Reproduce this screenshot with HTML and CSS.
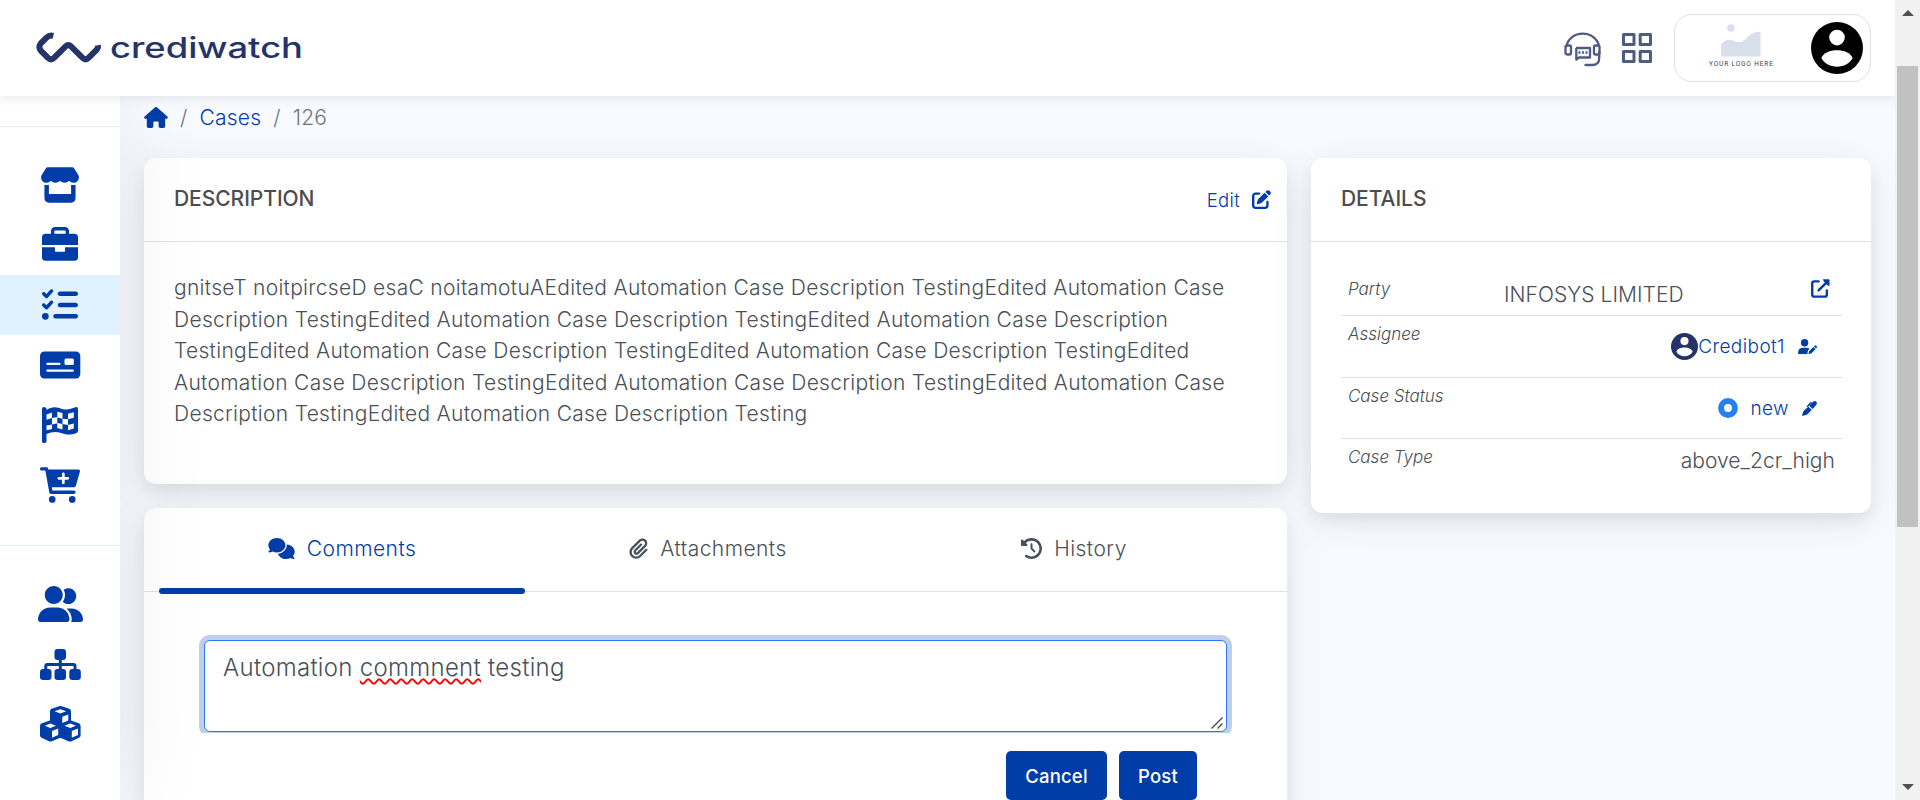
FILE: index.html
```html
<!DOCTYPE html>
<html lang="en">
<head>
<meta charset="utf-8">
<title>Crediwatch - Case 126</title>
<link rel="stylesheet" href="styles.css">
</head>
<body>
<div class="page">
  <header class="topbar">
    <a class="brand">
      <svg class="brand-mark" width="66" height="32" viewBox="0 0 66 32"><path d="M18.300 3.800 C14.800 3 13.600 3.600 11.800 5.400 L5.800 11.400 C3.800 13.600 3.800 16.400 5.800 18.600 L13 25.900 C15 27.800 17 27.800 19 25.900 L30.600 14.300 C32.300 12.600 34.300 12.600 36 14.300 L47.600 25.900 C49.600 27.800 51.600 27.800 53.500 25.900 L61.500 17.900 C62.800 16.500 63.200 15 62.900 13.300" fill="none" stroke="#253369" stroke-width="6"/></svg>
      <svg class="brand-name" width="194" height="32" viewBox="0 0 194 32"><text x="0" y="26" textLength="193" lengthAdjust="spacingAndGlyphs">crediwatch</text></svg>
    </a>
    <div class="top-actions">
      <svg class="headset" width="38" height="38" viewBox="0 0 38 38" fill="none" stroke="#4e5d7f" stroke-width="2.300"><path d="M2.500 16 A16.500 15 0 0 1 35 16 M35.200 22 V28 Q35.200 35 28 35 H21.500" stroke-linecap="round"/><rect x="1.500" y="15.500" width="5.500" height="9" rx="1.500"/><rect x="30" y="15.500" width="5.500" height="9" rx="1.500"/><path d="M12 18 H26 V27.500 H15 L12.300 29.500 V18" stroke-linejoin="round"/><path d="M14.500 22.500 H24" stroke-dasharray="2 1.500"/></svg>
      <svg class="apps" width="30" height="30" viewBox="0 0 30 30" fill="none" stroke="#4e5d7f" stroke-width="3" stroke-linejoin="round"><rect x="1.500" y="1.500" width="10.500" height="10"/><rect x="18.200" y="1.500" width="10.300" height="10"/><rect x="1.500" y="18.500" width="10.500" height="10"/><rect x="18.200" y="18.500" width="10.300" height="10"/></svg>
      <div class="account">
        <div class="company">
          <svg width="40" height="33" viewBox="0 0 40 33" fill="#d8dfeb"><circle cx="10" cy="4" r="3.800"/><path d="M0 32.500 V20.500 Q5 14 12 16.500 C20 19.500 22 18 27 12.500 Q32 7.500 39.500 7.700 V32.500 Z"/></svg>
          <span class="company-name">YOUR LOGO HERE</span>
        </div>
        <svg width="52" height="52" viewBox="0 0 52 52"><circle cx="26" cy="26" r="26" fill="#000"/><circle cx="26" cy="15.600" r="7.800" fill="#fff"/><path d="M10.400 36 C14 25.500 38 25.500 41.600 36 C36 47.500 16 47.500 10.400 36Z" fill="#fff"/></svg>
      </div>
    </div>
  </header>

  <div class="body">
    <nav class="sidebar">
      <div class="side-group first">
        <a class="side-item"><svg width="40" height="36" viewBox="0 0 576 512"><path d="M547.6 103.800L490.300 13.100C485.200 5 476.100 0 466.400 0H109.600C99.900 0 90.800 5 85.700 13.100L28.300 103.800c-29.600 46.800-3.400 111.900 51.900 119.400c4 .5 8.100 .8 12.100 .8c26.100 0 49.300-11.400 65.200-29c15.900 17.600 39.100 29 65.200 29c26.100 0 49.300-11.400 65.200-29c15.900 17.600 39.100 29 65.200 29c26.200 0 49.300-11.400 65.200-29c16 17.600 39.100 29 65.200 29c4.100 0 8.100-.3 12.100-.8c55.500-7.400 81.800-72.500 52.100-119.400zM499.700 254.900l-.1 0c-5.300 .7-10.700 1.100-16.200 1.100c-12.400 0-24.300-1.900-35.400-5.300V384H128V250.600c-11.200 3.500-23.200 5.400-35.600 5.400c-5.500 0-11-.4-16.300-1.100l-.1 0c-4.100-.6-8.100-1.300-12-2.300V448c0 35.300 28.700 64 64 64H448c35.300 0 64-28.700 64-64V252.600c-4 1-8 1.800-12.300 2.300z"/></svg></a>
        <a class="side-item"><svg width="36" height="36" viewBox="0 0 512 512"><path d="M184 48H328c4.400 0 8 3.600 8 8V96H176V56c0-4.400 3.600-8 8-8zm-56 8V96H48C21 96 0 117 0 144v112H512V144c0-27-21-48-48-48H384V56c0-30.900-25.100-56-56-56H184c-30.900 0-56 25.100-56 56zM512 288H328v48c0 8-8 16-16 16H200c-8 0-16-8-16-16V288H0V432c0 27 21 48 48 48H464c27 0 48-21 48-48V288z"/></svg></a>
        <a class="side-item active"><svg width="36" height="36" viewBox="0 0 512 512"><path d="M152.100 38.200c9.900 8.900 10.700 24 1.800 33.900l-72 80c-4.400 4.900-10.600 7.800-17.200 7.900s-12.900-2.400-17.600-7L7 113C-2.300 103.600-2.300 88.400 7 79s24.600-9.400 33.900 0l22.100 22.100 55.100-61.200c8.900-9.900 24-10.700 33.900-1.800zm0 160c9.900 8.900 10.700 24 1.800 33.900l-72 80c-4.400 4.900-10.600 7.800-17.200 7.900s-12.900-2.400-17.600-7L7 273c-9.400-9.400-9.400-24.600 0-33.900s24.600-9.400 33.900 0l22.100 22.100 55.100-61.200c8.900-9.900 24-10.700 33.900-1.800zM224 96c0-17.700 14.300-32 32-32H480c17.700 0 32 14.300 32 32s-14.300 32-32 32H256c-17.700 0-32-14.300-32-32zm0 160c0-17.700 14.300-32 32-32H480c17.700 0 32 14.300 32 32s-14.300 32-32 32H256c-17.700 0-32-14.300-32-32zM160 416c0-17.700 14.300-32 32-32H480c17.700 0 32 14.300 32 32s-14.300 32-32 32H192c-17.700 0-32-14.300-32-32zM48 368a48 48 0 1 1 0 96 48 48 0 1 1 0-96z"/></svg></a>
        <a class="side-item"><svg width="40" height="36" viewBox="0 0 40 36"><rect y="4.500" width="40.300" height="27" rx="4.500"/><g fill="#fff"><rect x="6.300" y="15.700" width="14.200" height="2.200" rx="1"/><rect x="24.500" y="11.400" width="9.300" height="6.600" rx="1.500"/><rect x="6.300" y="22.600" width="27.500" height="2.200" rx="1"/></g></svg></a>
        <a class="side-item"><svg width="36" height="36" viewBox="0 0 36 36"><path d="M0 1.500Q0 0 2 0T4.500 1.500V3C10-1 15 0 20 2C25 3.500 29 2 33.500 .3Q36 -.5 36 2V24Q36 25.500 34.500 26C28 28.500 23 27.500 19 26C13 24 9 25.500 4.500 27V34.500Q4.500 36 2.200 36T0 34.500Z"/><path fill="#fff" d="M4.500 7.500L10 5.500V11L4.500 12.700ZM10 11L15.300 10V16.200L10 17.500ZM15.300 4.800L20.500 6V11.700L15.300 10.400ZM20.500 11.700L26 12.300V18L20.500 17ZM26 6.800L31.800 5.200V10.700L26 12.300ZM4.500 18.500L10 17.500V22L4.500 23.200ZM15.300 16L20.500 17V22.400L15.300 21ZM26 18L31.800 16.500V21.500L26 23.300Z"/></svg></a>
        <a class="side-item"><svg width="40" height="36" viewBox="0 0 576 512"><path d="M0 24C0 10.700 10.700 0 24 0H96c12 0 21 9 24 32H552c16 0 28 15 23 30l-58 206c-4 13-12 20-26 20H170.700l7 48H488c13.300 0 24 10.700 24 24s-10.700 24-24 24H158c-12 0-22-8-24-20L77 48H24C10.700 48 0 37.300 0 24zM128 464a48 48 0 1 1 96 0 48 48 0 1 1 -96 0zm336-48a48 48 0 1 1 0 96 48 48 0 1 1 0-96z"/><path fill="#fff" d="M252 160c0 11 9 20 20 20h44v44c0 11 9 20 20 20s20-9 20-20V180h44c11 0 20-9 20-20s-9-20-20-20H356V96c0-11-9-20-20-20s-20 9-20 20v44H272c-11 0-20 9-20 20z"/></svg></a>
      </div>
      <div class="side-group">
        <a class="side-item"><svg width="45" height="36" viewBox="0 0 640 512"><path d="M224 256c70.700 0 128-57.310 128-128S294.700 0 224 0C153.300 0 96 57.310 96 128S153.300 256 224 256zM274.700 304H173.300C77.610 304 0 381.600 0 477.300C0 496.500 15.520 512 34.660 512H413.300C432.500 512 448 496.500 448 477.300C448 381.600 370.400 304 274.700 304zM479.100 320h-73.850C451.200 357.700 480 414.100 480 477.300C480 490.100 476.200 501.900 470 512H608C625.700 512 640 497.700 640 480C640 391.600 568.400 320 479.100 320zM432 256C493.900 256 544 205.900 544 144S493.900 32 432 32c-25.110 0-48.040 8.555-66.720 22.510C376.800 76.630 384 101.400 384 128c0 35.520-11.930 68.140-31.590 94.710C372.700 243.200 400.800 256 432 256z"/></svg></a>
        <a class="side-item"><svg width="41" height="36" viewBox="0 0 41 36"><rect x="14.500" y="3" width="11.500" height="11" rx="3"/><rect y="23" width="11.500" height="11" rx="3"/><rect x="14.500" y="23" width="11.500" height="11" rx="3"/><rect x="29.300" y="23" width="11.500" height="11" rx="3"/><path d="M5.800 25V20Q5.800 18.500 7.300 18.500H33.500Q35 18.500 35 20V25M20.300 12V25" fill="none" stroke="#003da8" stroke-width="3"/></svg></a>
        <a class="side-item"><svg width="41" height="36" viewBox="0 0 41 36"><path d="M10 5Q10 3.500 11.500 2.800L19 .2Q20.400-.2 21.800 .2L29.300 2.800Q31 3.500 31 5.200V14.500L38.800 17.300Q40.600 18 40.600 20V29.500Q40.600 31 39 31.800L31.500 35.200Q30 35.900 28.500 35.200L20.300 31.800L12 35.200Q10.500 35.900 9 35.200L1.500 31.800Q0 31 0 29.500V20Q0 18 1.800 17.300L10 14.500Z"/><path fill="#fff" d="M14.500 5.300L20.300 3.200L26.300 5.300L20.300 7.500ZM22.300 10.800L28.300 8.600V14.500L22.300 17ZM4.800 19.700L10.300 17.600L16 19.700L10.300 21.900ZM24.500 19.700L30.300 17.600L36 19.700L30.300 21.900ZM12 25L18.200 22.500V29L12 31.800ZM31.800 25L38 22.500V29L31.800 31.800Z"/></svg></a>
      </div>
    </nav>

    <main class="content">
      <div class="crumbs">
        <svg width="24" height="21" viewBox="0 0 576 512"><path d="M575.800 255.500c0 18-15 32.100-32 32.100h-32V472c0 22.100-17.900 40-40 40H392c-22.100 0-40-17.900-40-40V372c0-12-8-20-20-20H244c-12 0-20 8-20 20v100c0 22.100-17.900 40-40 40H104c-22.100 0-40-17.900-40-40V287.600H32c-18 0-32-14-32-32.100c0-9 3-17 10-24L266.400 8c7-7 15-8 22-8s15 2 21 7L564.800 231.500c8 7 12 15 11 24z"/></svg>
        <span class="slash">/</span><a class="link">Cases</a><span class="slash">/</span><span>126</span>
      </div>
      <div class="columns">
        <div class="left">
          <section class="card description">
            <div class="card-head"><h2>DESCRIPTION</h2>
              <a class="edit link">Edit <svg width="19" height="19" viewBox="0 0 512 512"><path d="M471.600 21.700c-21.900-21.900-57.300-21.900-79.200 0L362.300 51.700l97.900 97.900 30.100-30.100c21.900-21.900 21.900-57.300 0-79.200L471.600 21.700zm-299.200 220c-6.100 6.100-10.800 13.600-13.500 21.900l-29.600 88.800c-2.900 8.600-.6 18.100 5.800 24.600s15.900 8.700 24.600 5.800l88.800-29.600c8.200-2.700 15.700-7.400 21.900-13.500L437.700 172.300 339.700 74.300 172.400 241.700zM96 64C43 64 0 107 0 160V416c0 53 43 96 96 96H352c53 0 96-43 96-96V320c0-17.700-14.300-32-32-32s-32 14.300-32 32v96c0 17.700-14.300 32-32 32H96c-17.700 0-32-14.300-32-32V160c0-17.700 14.300-32 32-32h96c17.700 0 32-14.300 32-32s-14.300-32-32-32H96z"/></svg></a>
            </div>
            <p class="desc-text">gnitseT noitpircseD esaC noitamotuAEdited Automation Case Description TestingEdited Automation Case<br>Description TestingEdited Automation Case Description TestingEdited Automation Case Description<br>TestingEdited Automation Case Description TestingEdited Automation Case Description TestingEdited<br>Automation Case Description TestingEdited Automation Case Description TestingEdited Automation Case<br>Description TestingEdited Automation Case Description Testing</p>
          </section>
          <section class="card comments">
            <div class="tabs">
              <a class="tab active"><svg width="27" height="21" viewBox="0 0 640 512"><path d="M208 352c114.900 0 208-78.800 208-176S322.900 0 208 0S0 78.800 0 176c0 38.600 14.700 74.300 39.600 103.400c-3.500 9.400-8.700 17.700-14.200 24.700c-4.800 6.200-9.700 11-13.300 14.300c-1.800 1.600-3.300 2.900-4.300 3.700c-.5 .4-.9 .7-1.100 .8l-.2 .2C1 327.200-1.400 334.400 .8 340.900S9.100 352 16 352c21.800 0 43.800-5.600 62.100-12.500c9.200-3.500 17.800-7.400 25.200-11.400C134.100 343.300 169.800 352 208 352zM448 176c0 112.300-99.100 196.900-216.500 207C255.800 457.400 336.400 512 432 512c38.200 0 73.900-8.700 104.700-23.900c7.500 4 16 7.900 25.200 11.400c18.300 6.900 40.300 12.500 62.100 12.500c6.900 0 13.100-4.500 15.200-11.100c2.100-6.600-.2-13.800-5.800-17.900c-1-.8-2.500-2-4.300-3.700c-3.600-3.300-8.500-8.100-13.300-14.300c-5.500-7-10.700-15.400-14.200-24.700c24.900-29 39.600-64.700 39.600-103.400c0-92.800-84.900-168.900-192.600-175.500c.4 5.100 .6 10.300 .6 15.500z"/></svg><span>Comments</span></a>
              <a class="tab"><svg width="19" height="21" viewBox="0 0 448 512"><path d="M364.200 83.800c-24.400-24.400-64-24.400-88.400 0l-184 184c-42.100 42.100-42.100 110.300 0 152.400s110.300 42.100 152.400 0l152-152c10.900-10.900 28.700-10.900 39.600 0s10.900 28.700 0 39.600l-152 152c-64 64-167.600 64-231.600 0s-64-167.600 0-231.600l184-184c46.300-46.300 121.300-46.300 167.600 0s46.300 121.300 0 167.600l-176 176c-28.600 28.600-75 28.600-103.600 0s-28.600-75 0-103.600l144-144c10.900-10.900 28.700-10.900 39.600 0s10.900 28.700 0 39.600l-144 144c-6.700 6.700-6.700 17.700 0 24.400s17.700 6.700 24.400 0l176-176c24.400-24.400 24.400-64 0-88.400z"/></svg><span>Attachments</span></a>
              <a class="tab"><svg width="21" height="21" viewBox="0 0 512 512"><path d="M75 75L41 41C25.900 25.900 0 36.600 0 57.900V168c0 13.300 10.700 24 24 24H134.100c21.400 0 32.100-25.900 17-41l-30.800-30.800C155 85.500 203 64 256 64c106 0 192 86 192 192s-86 192-192 192c-40.800 0-78.600-12.700-109.700-34.400c-14.500-10.100-34.400-6.600-44.600 7.900s-6.600 34.400 7.900 44.600C151.200 495 201.700 512 256 512c141.400 0 256-114.600 256-256S397.400 0 256 0C185.300 0 121.300 28.700 75 75zm181 53c-13.300 0-24 10.700-24 24V256c0 6.400 2.500 12.500 7 17l72 72c9.400 9.400 24.600 9.400 33.900 0s9.400-24.600 0-33.900l-65-65V152c0-13.300-10.700-24-24-24z"/></svg><span>History</span></a>
            </div>
            <div class="comment-form">
              <div class="field-clip">
                <div class="field">Automation <span class="misspelt">commnent</span> testing
                  <svg class="grip" width="12" height="12" viewBox="0 0 12 12"><path d="M.5 11.500L11.500 .5M6.500 11.500L11.500 6.500" stroke="#444" stroke-width="1.300"/></svg>
                </div>
              </div>
              <div class="buttons"><button class="btn">Cancel</button><button class="btn post">Post</button></div>
            </div>
          </section>
        </div>
        <section class="card details">
          <div class="card-head"><h2>DETAILS</h2></div>
          <div class="rows">
            <div class="row party"><em>Party</em><span class="value">INFOSYS LIMITED</span><svg width="19" height="19" viewBox="0 0 20 20"><path d="M8 2.500H3.500Q1.300 2.500 1.300 4.500V16.500Q1.300 18.500 3.500 18.500H14.500Q16.700 18.500 16.700 16.500V12M8 12L16.500 3.500" fill="none" stroke="#003da8" stroke-width="2.500" stroke-linecap="round"/><path d="M12.500 .3H18.500Q19.500 .3 19.500 1.300V7.500L17.300 6.500L13.500 2.500Z"/></svg></div>
            <div class="row assignee"><em>Assignee</em><a class="link value"><svg width="27" height="27" viewBox="0 0 52 52"><circle cx="26" cy="26" r="26" fill="#253369"/><circle cx="26" cy="15.600" r="7.800" fill="#fff"/><path d="M10.400 36 C14 25.500 38 25.500 41.600 36 C36 47.500 16 47.500 10.400 36Z" fill="#fff"/></svg><span>Credibot1</span><svg class="act" width="19" height="15" viewBox="0 0 19 15"><circle cx="6.600" cy="3.700" r="3.700"/><path d="M0 14C0 10.500 2 8.800 5 8.800H8.500Q10.500 8.800 11.500 9.700L10 11.500L9.300 15H1Q0 15 0 14ZM10.500 15L11 12.300L15.500 7.900L17.600 10L13.200 14.400ZM16 7.300L17 6.400Q18 6 18.800 7.200Q19 8 18.900 8.500L18 9.400Z"/></svg></a></div>
            <div class="row status"><em>Case Status</em><a class="link value"><svg width="20" height="20" viewBox="0 0 20 20"><circle cx="10" cy="10" r="6.900" fill="none" stroke="#2680f0" stroke-width="6"/></svg><span>new</span><svg class="act" width="15" height="15" viewBox="0 0 15 15"><path d="M4.300 5.800L8 1.500Q9 .5 10 1.200L9.300 2.100L6 6ZM10.700 1L11.500 .5Q13 -.4 14.300 .8T14.500 3.500L10.700 7.900L7.200 4.800ZM6.400 5.700L9.800 8.800L6 12.700Q5 13.800 3 14.300L0 15L.7 12Q1.200 10 2.200 9.300Z"/></svg></a></div>
            <div class="row type"><em>Case Type</em><span class="value">above_2cr_high</span></div>
          </div>
        </section>
      </div>
    </main>
  </div>
</div>
<aside class="scrollbar"><i class="arrow up"></i><div class="thumb"></div><i class="arrow down"></i></aside>
</body>
</html>
```
FILE: styles.css
```css
* { box-sizing: border-box; }
body {
  margin: 0; height: 800px; overflow: hidden; display: flex;
  font-family: Inter, "Liberation Sans", sans-serif;
  font-weight: 300; font-size: 21px; letter-spacing: .3px; color: #495057;
  background: #f9faff;
}
svg { display: block; flex: none; overflow: visible; }
.page { width: 1895px; height: 800px; display: flex; flex-direction: column; overflow: hidden; }
.topbar {
  height: 96px; flex: none; position: relative; z-index: 3; background: #fff;
  box-shadow: 0 3px 9px rgba(0,0,0,.08);
  display: flex; align-items: center; justify-content: space-between; padding: 0 24px 0 35px;
}
.brand { display: flex; align-items: center; gap: 9px; }
.brand-name text { font-size: 28px; font-weight: 500; fill: #253369; letter-spacing: 0; }
.top-actions { display: flex; align-items: center; }
.apps { margin: 0 22px 0 20px; }
.headset { margin-top: 2px; }
.account {
  width: 197px; height: 68px; border: 1px solid #dfe1e7; border-radius: 18px;
  display: flex; align-items: center; justify-content: space-between; padding: 0 7px 0 34px;
}
.company { display: flex; flex-direction: column; align-items: center; gap: 3px; padding-bottom: 4px; }
.company-name { font: 400 6.500px/7px Roboto, sans-serif; letter-spacing: .88px; color: #3a4250; white-space: nowrap; margin-top: 1px; }

.body { display: flex; flex: 1; min-height: 0; }
.sidebar { width: 120px; flex: none; background: #fff; position: relative; z-index: 2; box-shadow: 0 0 96px rgba(20,20,40,.08); fill: #003da8; padding-top: 30px; }
.side-group { border-top: 1px solid #dff1ff; padding-top: 28px; }
.side-group.first { height: 419px; }
.side-item { height: 60px; display: flex; align-items: center; justify-content: center; }
.side-item.active { background: #e0f2ff; }

.content { flex: 1; padding: 0 24px; fill: #003da8; }
.crumbs { height: 42px; display: flex; align-items: center; color: #6c757d; margin-bottom: 20px; letter-spacing: .2px; }
.slash { margin: 0 12px; }
.link { color: #003da8; }
.columns { display: flex; align-items: flex-start; gap: 24px; }
.left { width: 1143px; display: flex; flex-direction: column; gap: 24px; }
.card { background: #fff; border-radius: 12px; box-shadow: 0 8px 16px rgba(0,0,0,.07), 0 8px 48px rgba(0,0,0,.07); }
.card-head { height: 84px; border-bottom: 1px solid #dee2e6; display: flex; align-items: center; justify-content: space-between; padding: 0 16px 2px 30px; }
.card-head h2 { margin: 0; font-size: 21px; font-weight: 450; letter-spacing: -.05px; color: #4d4d4d; }
.edit { display: flex; align-items: center; gap: 12px; font-size: 18.500px; padding-top: 2px; }
.description { height: 326px; }
.desc-text { margin: 30px 0 0 30px; line-height: 31.500px; white-space: nowrap; }
.comments { height: 400px; }
.tabs { height: 84px; border-bottom: 1px solid #dee2e6; display: grid; grid-template-columns: 366px 366px 366px; padding-left: 15px; letter-spacing: .45px; }
.tab { display: flex; align-items: center; justify-content: center; gap: 12px; height: 86px; padding-top: 1px; border-bottom: 6px solid transparent; fill: #495057; }
.tab.active { color: #003da8; fill: #003da8; position: relative; }
.tab.active::after { content: ""; position: absolute; left: 0; right: 0; bottom: -6px; height: 6px; border-radius: 3px; background: #003da8; }
.comment-form { padding: 42px 54px 0; }
.field-clip { overflow: hidden; padding: 6px 6px 1px; height: 99px; }
.field {
  position: relative; height: 92px; border: 1px solid #2a78f5; border-radius: 6px; background: #fff;
  box-shadow: 0 0 0 5px #bfceea; padding: 7px 18px; font-size: 24px; line-height: 40px; letter-spacing: .3px;
}
.misspelt { text-decoration: underline wavy #f00 1.500px; text-decoration-skip-ink: none; text-underline-offset: 2px; }
.grip { position: absolute; right: 3px; bottom: 2px; }
.buttons { display: flex; justify-content: flex-end; gap: 12px; padding: 18px 36px 0 0; }
.btn { width: 101px; height: 49px; border: 0; border-radius: 5px; background: #003da8; color: #fff; font: 450 18.500px Inter, sans-serif; letter-spacing: .2px; padding: 0; }
.btn.post { width: 78px; }

.details { width: 560px; height: 355px; }
.rows { padding: 30px 29px 0 30px; }
.row { display: flex; justify-content: space-between; border-bottom: 1px solid #dee2e6; padding: 0 7px; }
.row em { font-size: 17px; letter-spacing: 0; line-height: 22px; }
.row .value { display: flex; align-items: center; letter-spacing: .05px; }
.row.party { height: 44px; }
.party em { width: 156px; padding-top: 6px; }
.party .value { flex: 1; padding-top: 1px; }
.party svg { margin: 7px 5px 0 0; }
.row.assignee { height: 62px; }
.row.status { height: 61px; }
.assignee em, .status em, .type em { padding-top: 7px; }
.row.assignee .value, .row.status .value { font-size: 19px; letter-spacing: .4px; padding-right: 18px; }
.assignee .act { margin-left: 13px; }
.status .act { margin-left: 13px; }
.status .value span { margin-left: 12px; }
.row.type { height: 42px; border: 0; }

.scrollbar { width: 25px; background: #f1f1f1; display: flex; flex-direction: column; align-items: center; }
.thumb { width: 21px; height: 461px; background: #c1c1c1; margin-top: 50px; }
.arrow { border: 6px solid transparent; width: 0; height: 0; }
.arrow.up { border-top: 0; border-bottom-color: #505050; margin-top: 10px; }
.arrow.down { border-bottom: 0; border-top-color: #505050; margin-top: auto; margin-bottom: 10px; }
```
